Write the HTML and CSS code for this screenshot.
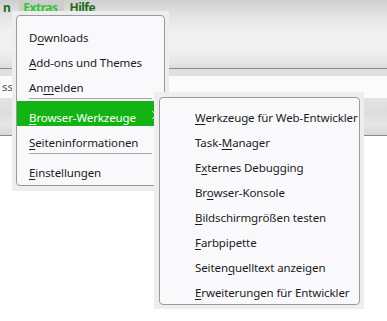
FILE: index.html
```html
<!DOCTYPE html>
<html lang="de">
<head>
    <meta charset="UTF-8">
    <meta name="viewport" content="width=device-width, initial-scale=1.0">
    <title>Extras-Menü</title>
    <link rel="stylesheet" href="styles.css">
</head>
<body>
    <div class="window">
        <div class="toolbar">
            <nav class="menubar">
                <span class="menubar-item">n</span>
                <span class="menubar-item active">Extras</span>
                <span class="menubar-item">Hilfe</span>
            </nav>
        </div>
        <div class="toolbar-rule"></div>
        <div class="toolbar-foot"></div>
        <div class="urlbar">ss</div>
        <div class="tabstrip"></div>
        <div class="content"></div>
    </div>

    <!-- Extras menu -->
    <div class="popup popup-main">
        <ul class="menu">
            <li class="menu-item">D<u>o</u>wnloads</li>
            <li class="menu-item"><u>A</u>dd-ons und Themes</li>
            <li class="menu-item">An<u>m</u>elden</li>
            <li class="menu-separator"></li>
            <li class="menu-item selected has-submenu"><u>B</u>rowser-Werkzeuge
                <svg class="submenu-arrow" width="6" height="10" viewBox="0 0 6 10"><path d="M1 1 L5 5 L1 9" fill="none" stroke="currentColor" stroke-width="1"/></svg>
            </li>
            <li class="menu-item"><u>S</u>eiteninformationen</li>
            <li class="menu-separator"></li>
            <li class="menu-item"><u>E</u>instellungen</li>
        </ul>
    </div>

    <!-- Browser-Werkzeuge submenu -->
    <div class="popup popup-sub">
        <ul class="menu">
            <li class="menu-item"><u>W</u>erkzeuge für Web-Entwickler</li>
            <li class="menu-item">Task-<u>M</u>anager</li>
            <li class="menu-item">E<u>x</u>ternes Debugging</li>
            <li class="menu-item">Br<u>o</u>wser-Konsole</li>
            <li class="menu-item"><u>B</u>ildschirmgrößen testen</li>
            <li class="menu-item"><u>F</u>arbpipette</li>
            <li class="menu-item">Seiten<u>q</u>uelltext anzeigen</li>
            <li class="menu-item"><u>E</u>rweiterungen für Entwickler</li>
        </ul>
    </div>
</body>
</html>
```

FILE: styles.css
```css
body {
    margin: 0;
    padding: 0;
    background-color: #fff;
    font-family: "Noto Sans", sans-serif;
    font-size: 11.5px;
    letter-spacing: -0.1px;
    color: #1c1b22;
    overflow: hidden;
}
.window {
    height: 321px;
    display: flex;
    flex-direction: column;
}
/* Toolbar area */
.toolbar {
    height: 68px;
    background: linear-gradient(#cfcfcf 0, #dadada 8px, #e7e7e7 20px, #f1f1f1 32px, #f0f0f0 50px, #e6e6e6 62px, #dcdcdc 68px);
}
.toolbar-rule {
    height: 1px;
    background-color: #8c8c8c;
}
.toolbar-foot {
    height: 7px;
    background-color: #e0e0e0;
}
.menubar {
    display: flex;
    height: 15px;
    padding-left: 3px;
}
.menubar-item {
    font-weight: bold;
    font-size: 12px;
    letter-spacing: -0.5px;
    line-height: 15px;
    color: #1f6b1f;
}
.menubar-item.active {
    color: #34c434;
    background-color: #cdcdcd;
    margin-left: 9px;
    padding: 0 6px 0 4px;
}
.menubar-item:last-child {
    margin-left: 6px;
}
.urlbar {
    height: 22px;
    padding-left: 2px;
    line-height: 22px;
    color: #4a5560;
    background-color: #fbfbfb;
}
.tabstrip {
    height: 37px;
    background: linear-gradient(#e4e4e4, #dcdcdc 40%, #e6e6e6 70%, #d8d8d8);
    border-bottom: 1px solid #8c8c8c;
}
.content {
    flex-grow: 1;
    background-color: #fff;
}
/* Popup menus */
.popup {
    position: absolute;
    background-color: #eeeeee;
}
.popup-main {
    left: 12px;
    top: 11px;
    padding: 4px 4px 5px 4px;
}
.popup-sub {
    left: 154px;
    top: 92px;
    padding: 5px 4px 4px 5px;
}
.menu {
    list-style: none;
    margin: 0;
    background-color: #f9f9fb;
    border: 1px solid #9a9a9a;
    border-radius: 4px;
}
.popup-main .menu {
    width: 147px;
    padding: 5px 0 4px 0;
}
.popup-sub .menu {
    width: 199px;
    padding: 3px 0 3px 0;
}
.menu-item {
    position: relative;
    height: 25px;
    box-sizing: border-box;
    padding-top: 9px;
    line-height: 16px;
    white-space: nowrap;
}
.popup-main .menu-item {
    padding-left: 12px;
}
.popup-sub .menu-item {
    padding-left: 35px;
}
.menu-item u {
    text-underline-offset: 2px;
}
.menu-item.selected {
    background-color: #13b313;
    color: #fff;
}
.submenu-arrow {
    position: absolute;
    right: 7px;
    top: 9px;
    color: #c9f0c9;
}
.menu-separator {
    height: 1px;
    margin: 2px 12px 2px 12px;
    background-color: #a8a8a8;
}
```
